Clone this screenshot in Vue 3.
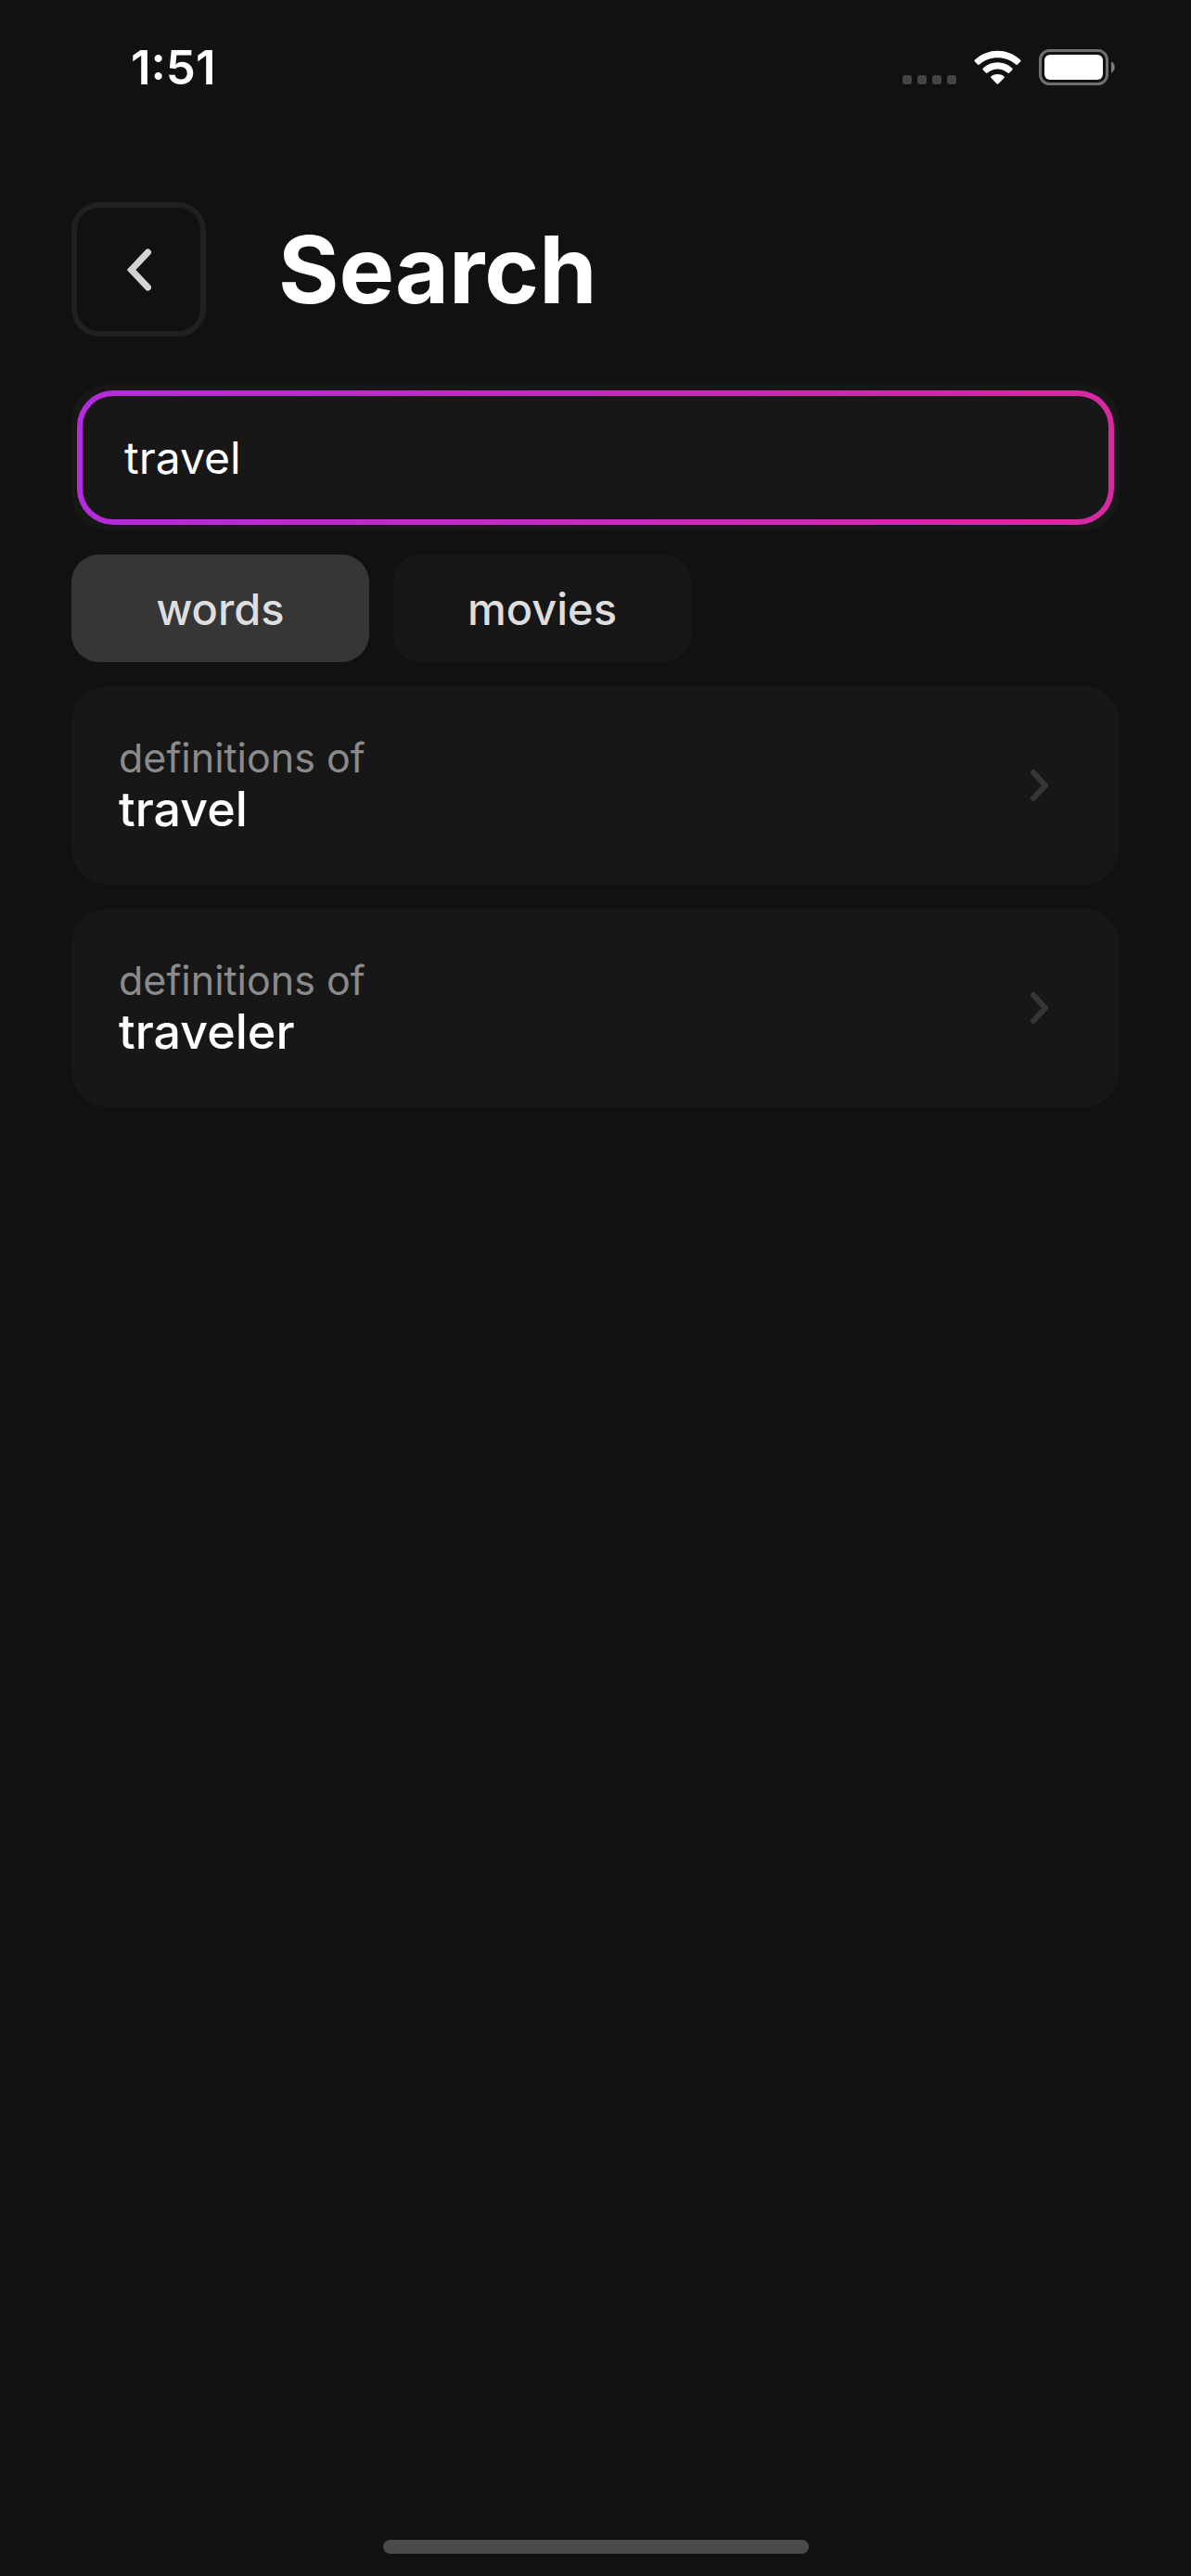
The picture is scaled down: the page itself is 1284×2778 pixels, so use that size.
<script setup>
import { computed, ref } from 'vue'

const query = ref('travel')
const tabs = ['words', 'movies']
const activeTab = ref('words')
const words = ['travel', 'traveler']
const results = computed(() => words.filter((word) => word.startsWith(query.value)))
</script>

<template>
  <div class="screen">
    <header class="status-bar">
      <time class="clock">1:51</time>
      <div class="indicators">
        <div class="cellular" aria-label="No signal">
          <i v-for="n in 4" :key="n" class="dot"></i>
        </div>
        <svg class="wifi" viewBox="0 0 51 38" width="51" height="38" aria-label="Wi-Fi">
          <path d="M1 10.6Q0 11.5 1 12.5L4 15.6Q5 16.4 6 15.5C17 5.9 34 5.9 45 15.5Q46 16.4 47 15.6L50 12.5Q51 11.5 50 10.6C36-2.6 15-2.6 1 10.6Z" />
          <path d="M9.8 19.4Q8.8 20.4 9.8 21.4L12.8 24.5Q13.8 25.4 14.8 24.5C21 19.2 30 19.2 36.2 24.5Q37.2 25.4 38.2 24.5L41.2 21.4Q42.2 20.4 41.2 19.4C32.3 11.2 18.7 11.2 9.8 19.4Z" />
          <path d="M18.6 28.3Q17.6 29.3 18.6 30.3L24.5 36.3Q25.5 37.2 26.5 36.3L32.4 30.3Q33.4 29.3 32.4 28.3C28.6 25.1 22.4 25.1 18.6 28.3Z" />
        </svg>
        <svg class="battery" viewBox="0 0 82 39" width="82" height="39" aria-label="Battery full">
          <rect x="1.5" y="1.5" width="72" height="36" rx="10" fill="none" stroke="#6f6f6f" stroke-width="3" />
          <rect x="6" y="6" width="63" height="27" rx="6" fill="#fff" />
          <path d="M78 13.5C83 15.5 83 23.5 78 25.5Z" fill="#7d7d7d" />
        </svg>
      </div>
    </header>

    <main class="content">
      <div class="heading">
        <button class="back" type="button" aria-label="Back">
          <svg viewBox="0 0 26 46" width="26" height="46">
            <path d="M22.5 4L4.500 23L22.5 42" />
          </svg>
        </button>
        <h1 class="title">Search</h1>
      </div>

      <div class="field">
        <input v-model="query" class="input" type="text" aria-label="Search" />
      </div>

      <div class="tabs">
        <button
          v-for="tab in tabs"
          :key="tab"
          class="tab"
          :class="{ active: tab === activeTab }"
          type="button"
          @click="activeTab = tab"
        >{{ tab }}</button>
      </div>

      <a v-for="word in results" :key="word" class="card" :href="`#${word}`">
        <span class="card-text">
          <span class="caption">definitions of</span>
          <span class="word">{{ word }}</span>
        </span>
        <svg class="chevron" viewBox="0 0 20 36" width="20" height="36">
          <path d="M4 4L17 18L4 32" />
        </svg>
      </a>
    </main>

    <div class="home-indicator"></div>
  </div>
</template>

<style>
body {
  margin: 0;
  background: #111;
}
</style>

<style scoped>
.screen {
  box-sizing: border-box;
  display: flex;
  flex-direction: column;
  min-height: 100vh;
  padding-bottom: 24px;
  background: #111;
  color: #fff;
  font-family: Inter, 'Liberation Sans', sans-serif;
}

.status-bar {
  display: flex;
  align-items: center;
  justify-content: space-between;
  height: 145px;
  padding: 0 82px 0 141px;
}

.clock {
  font-size: 51px;
  font-weight: 600;
  line-height: 60px;
}

.indicators {
  display: flex;
  align-items: center;
  gap: 19px;
}

.cellular {
  display: flex;
  align-self: flex-end;
  gap: 6px;
  padding-bottom: 1px;
}

.dot {
  width: 10px;
  height: 10px;
  border-radius: 3px;
  background: #444;
}

.wifi {
  fill: #fff;
}

.content {
  display: flex;
  flex: 1;
  flex-direction: column;
  gap: 26px;
  padding: 73px 77px 0;
}

.heading {
  display: flex;
  align-items: center;
  gap: 78px;
  margin-bottom: 26px;
}

.back {
  display: flex;
  align-items: center;
  justify-content: center;
  box-sizing: border-box;
  width: 145px;
  height: 145px;
  padding: 0;
  border: 6px solid #202020;
  border-radius: 30px;
  background: none;
}

.back path,
.chevron path {
  fill: none;
  stroke: #d4d4d4;
  stroke-width: 7;
  stroke-linecap: round;
}

.chevron path {
  stroke: #363636;
  stroke-width: 6;
}

.title {
  margin: 0;
  font-size: 100px;
  font-weight: 700;
  line-height: 120px;
}

.field {
  display: flex;
  padding: 6px;
  border-radius: 39px;
  background: #171717;
}

.input {
  flex: 1;
  box-sizing: border-box;
  min-width: 0;
  height: 145px;
  padding: 0 45px;
  border: 6px solid transparent;
  border-radius: 39px;
  outline: none;
  background:
    linear-gradient(#171717, #171717) padding-box,
    linear-gradient(90deg, #b42bdb, #d829a0) border-box;
  color: #fff;
  font-family: inherit;
  font-size: 48px;
}

.tabs {
  display: flex;
  gap: 26px;
}

.tab {
  width: 321px;
  height: 116px;
  padding: 0;
  border: 0;
  border-radius: 30px;
  background: #171717;
  color: #dedede;
  font-family: inherit;
  font-size: 47px;
  font-weight: 500;
}

.tab.active {
  background: #363636;
}

.card {
  display: flex;
  align-items: center;
  justify-content: space-between;
  padding: 51px 77px 51px 51px;
  border-radius: 39px;
  background: #171717;
  color: #fff;
  text-decoration: none;
}

.card-text {
  display: flex;
  flex-direction: column;
}

.caption {
  color: #8b8b8b;
  font-size: 43px;
  line-height: 52px;
}

.word {
  font-size: 52px;
  font-weight: 500;
  line-height: 60px;
}

.home-indicator {
  align-self: center;
  width: 459px;
  height: 15px;
  border-radius: 8px;
  background: #4b4b4b;
}
</style>
